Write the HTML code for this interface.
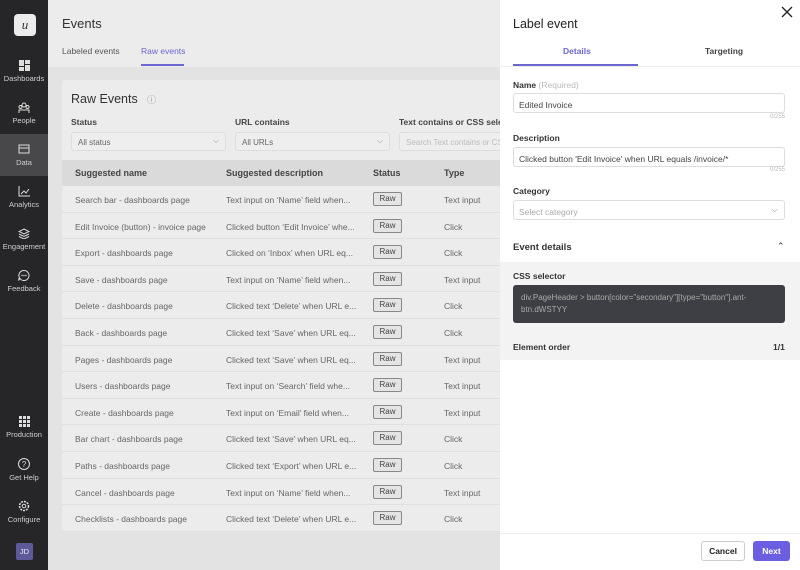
<!DOCTYPE html>
<html><head><style>
*{box-sizing:border-box;margin:0;padding:0}
body{width:800px;height:570px;overflow:hidden;font-family:"Liberation Sans",sans-serif;background:#e3e3e3;position:relative;color:#333}
.sb{position:absolute;left:0;top:0;width:48px;height:570px;background:#262628}
.logo{position:absolute;left:14px;top:14px;width:22px;height:22px;background:#ececec;border-radius:4px;font:italic 13px "Liberation Serif",serif;text-align:center;line-height:22px;color:#333}
.si{position:absolute;left:0;width:48px;text-align:center;color:#cfcfcf;font-size:7.5px}
.si svg{display:block;margin:0 auto 3px}
.hdr{position:absolute;left:48px;top:0;width:452px;height:67px;background:#ececec}
.card{position:absolute;left:62px;top:80px;width:438px;height:452px;background:#ececec;border-radius:3px 0 0 3px}
.row{position:absolute;left:62px;width:438px;height:26.6px;border-bottom:1px solid #e0e0e0;font-size:8.5px;color:#666}
.row span{position:absolute;top:9px;white-space:nowrap}
.raw{position:absolute;left:311px;top:6px;width:29px;height:14px;border:1px solid #888;border-radius:2px;background:#e4e4e4;text-align:center;font-size:8px;line-height:12px;color:#444}
.pn{position:absolute;left:500px;top:0;width:300px;height:570px;background:#fff}
.lab{position:absolute;left:13px;font-size:8.5px;color:#333;font-weight:bold}
.inp{position:absolute;left:13px;width:272px;height:20px;border:1px solid #ddd;border-radius:3px;font-size:8.5px;color:#444;padding:6px 5px}
.cnt{position:absolute;right:15px;font-size:6px;color:#bbb}
</style></head><body>
<div class="sb">
<div class="logo">u</div>
<div class="si" style="top:60px"><svg width="11" height="11"><rect x="0" y="0" width="5" height="6" fill="#ddd"/><rect x="6" y="0" width="5" height="4" fill="#ddd"/><rect x="0" y="7" width="5" height="4" fill="#ddd"/><rect x="6" y="5" width="5" height="6" fill="#ddd"/></svg>Dashboards</div>
<div class="si" style="top:102px"><svg width="12" height="11"><circle cx="6" cy="3" r="2" fill="none" stroke="#ddd"/><circle cx="2.5" cy="5" r="1.5" fill="none" stroke="#ddd"/><circle cx="9.5" cy="5" r="1.5" fill="none" stroke="#ddd"/><path d="M1 11v-3h10v3" fill="none" stroke="#ddd"/></svg>People</div>
<div style="position:absolute;left:0;top:134px;width:48px;height:42px;background:#48484a"></div>
<div class="si" style="top:144px"><svg width="12" height="11"><rect x="1" y="1" width="10" height="8" fill="none" stroke="#ddd"/><path d="M1 4h10" stroke="#ddd"/></svg>Data</div>
<div class="si" style="top:186px"><svg width="12" height="11"><path d="M1 0v10h11M3 8l3-3 2 2 3-4" fill="none" stroke="#ddd"/></svg>Analytics</div>
<div class="si" style="top:228px"><svg width="12" height="11"><path d="M6 1l5 2.5-5 2.5-5-2.5zM1 6l5 2.5 5-2.5M1 8.5l5 2.5 5-2.5" fill="none" stroke="#ddd"/></svg>Engagement</div>
<div class="si" style="top:270px"><svg width="12" height="11"><path d="M6 .5a5 5 0 1 1-4 8l-1.5 2 .8-3A5 5 0 0 1 6 .5z" fill="none" stroke="#ddd"/><circle cx="4" cy="5.5" r=".7" fill="#ddd"/><circle cx="6" cy="5.5" r=".7" fill="#ddd"/><circle cx="8" cy="5.5" r=".7" fill="#ddd"/></svg>Feedback</div>
<div class="si" style="top:416px"><svg width="11" height="11" fill="#ddd"><rect x="0" y="0" width="3" height="3"/><rect x="4" y="0" width="3" height="3"/><rect x="8" y="0" width="3" height="3"/><rect x="0" y="4" width="3" height="3"/><rect x="4" y="4" width="3" height="3"/><rect x="8" y="4" width="3" height="3"/><rect x="0" y="8" width="3" height="3"/><rect x="4" y="8" width="3" height="3"/><rect x="8" y="8" width="3" height="3"/></svg>Production</div>
<div class="si" style="top:458px"><svg width="12" height="12"><circle cx="6" cy="6" r="5.5" fill="none" stroke="#ddd"/><text x="6" y="9" font-size="8" fill="#ddd" text-anchor="middle">?</text></svg>Get Help</div>
<div class="si" style="top:500px"><svg width="12" height="12"><circle cx="6" cy="6" r="4.5" fill="none" stroke="#ddd" stroke-width="1.5" stroke-dasharray="2 1"/><circle cx="6" cy="6" r="1.8" fill="none" stroke="#ddd"/></svg>Configure</div>
<div style="position:absolute;left:16px;top:543px;width:17px;height:17px;background:#5d5a9a;border-radius:2px;color:#eee;font-size:7.5px;text-align:center;line-height:17px">JD</div>
</div>
<div class="hdr">
<div style="position:absolute;left:14px;top:16px;font-size:13px;color:#333">Events</div>
<div style="position:absolute;left:14px;top:46px;font-size:8.5px;color:#555">Labeled events</div>
<div style="position:absolute;left:93px;top:46px;font-size:8.5px;color:#6b66d0">Raw events</div>
<div style="position:absolute;left:93px;top:64px;width:43px;height:2px;background:#6b66d0"></div>
</div>
<div class="card">
<div style="position:absolute;left:9px;top:12px;font-size:12.5px;color:#333">Raw Events <span style="font-size:9px;color:#999;margin-left:6px">ⓘ</span></div>
<div style="position:absolute;left:9px;top:37px;font-size:8.5px;font-weight:bold;color:#444">Status</div>
<div style="position:absolute;left:173px;top:37px;font-size:8.5px;font-weight:bold;color:#444">URL contains</div>
<div style="position:absolute;left:337px;top:37px;font-size:8.5px;font-weight:bold;color:#444;white-space:nowrap">Text contains or CSS selecto</div>
<div style="position:absolute;left:9px;top:52px;width:155px;height:19px;border:1px solid #ddd;border-radius:3px;font-size:8px;color:#666;padding:5px 6px;background:#eee">All status<span style="position:absolute;right:6px;top:3px;color:#999">⌵</span></div>
<div style="position:absolute;left:173px;top:52px;width:155px;height:19px;border:1px solid #ddd;border-radius:3px;font-size:8px;color:#666;padding:5px 6px;background:#eee">All URLs<span style="position:absolute;right:6px;top:3px;color:#999">⌵</span></div>
<div style="position:absolute;left:337px;top:52px;width:110px;height:19px;border:1px solid #ddd;border-radius:3px;font-size:8px;color:#bbb;padding:5px 6px;background:#eee;white-space:nowrap;overflow:hidden">Search Text contains or CSS</div>
<div style="position:absolute;left:0;top:80px;width:438px;height:26px;background:#dbdada;font-size:9px;color:#444;font-weight:bold">
<span style="position:absolute;left:13px;top:8px">Suggested name</span><span style="position:absolute;left:164px;top:8px">Suggested description</span><span style="position:absolute;left:311px;top:8px">Status</span><span style="position:absolute;left:382px;top:8px">Type</span></div>
</div>
<div id="rows"></div>
<div class="pn">
<div style="position:absolute;left:13px;top:17px;font-size:12.5px;color:#222">Label event</div>
<svg style="position:absolute;left:281px;top:6px" width="12" height="12"><path d="M1 1l10 10M11 1L1 11" stroke="#222" stroke-width="1.3"/></svg>
<div style="position:absolute;left:63px;top:46px;font-size:8.5px;color:#6b66d0;font-weight:bold">Details</div>
<div style="position:absolute;left:205px;top:46px;font-size:8.5px;color:#444;font-weight:bold">Targeting</div>
<div style="position:absolute;left:13px;top:64px;width:125px;height:2px;background:#6b66d0"></div>
<div style="position:absolute;left:0;top:66px;width:300px;height:1px;background:#eee"></div>
<div class="lab" style="top:80px">Name <span style="font-weight:normal;color:#bbb">(Required)</span></div>
<div class="inp" style="top:93px">Edited Invoice</div>
<div class="cnt" style="top:114px">0/255</div>
<div class="lab" style="top:133px">Description</div>
<div class="inp" style="top:147px">Clicked button 'Edit Invoice' when URL equals /invoice/*</div>
<div class="cnt" style="top:167px">0/255</div>
<div class="lab" style="top:186px">Category</div>
<div class="inp" style="top:200px;color:#aaa">Select category<span style="position:absolute;right:6px;top:3px;color:#888">⌵</span></div>
<div style="position:absolute;left:13px;top:242px;font-size:9.5px;font-weight:bold;color:#333">Event details</div>
<div style="position:absolute;left:277px;top:241px;font-size:9px;color:#333">⌃</div>
<div style="position:absolute;left:0;top:262px;width:300px;height:98px;background:#f3f3f3">
<div class="lab" style="top:9px">CSS selector</div>
<div style="position:absolute;left:13px;top:23px;width:272px;height:38px;background:#3d3f44;border-radius:3px;color:#aaa;font-size:8px;padding:7px 8px;line-height:12px">div.PageHeader &gt; button[color="secondary"][type="button"].ant-btn.dWSTYY</div>
<div class="lab" style="top:80px">Element order</div>
<div class="lab" style="top:80px;left:273px">1/1</div>
</div>
<div style="position:absolute;left:0;top:533px;width:300px;height:1px;background:#eee"></div>
<div style="position:absolute;left:201px;top:541px;width:44px;height:20px;border:1px solid #ccc;border-radius:3px;font-size:8.5px;font-weight:bold;text-align:center;line-height:18px;color:#222">Cancel</div>
<div style="position:absolute;left:253px;top:541px;width:37px;height:20px;background:#6b5ee0;border-radius:3px;font-size:8.5px;font-weight:bold;text-align:center;line-height:20px;color:#fff">Next</div>
</div>
<script>
var d=[["Search bar - dashboards page","Text input on ‘Name’ field when...","Text input"],["Edit Invoice (button) - invoice page","Clicked button ‘Edit Invoice’ whe...","Click"],["Export - dashboards page","Clicked on ‘Inbox’ when URL eq...","Click"],["Save - dashboards page","Text input on ‘Name’ field when...","Text input"],["Delete - dashboards page","Clicked text ‘Delete’ when URL e...","Click"],["Back - dashboards page","Clicked text ‘Save’ when URL eq...","Click"],["Pages - dashboards page","Clicked text ‘Save’ when URL eq...","Text input"],["Users - dashboards page","Text input on ‘Search’ field whe...","Text input"],["Create - dashboards page","Text input on ‘Email’ field when...","Text input"],["Bar chart - dashboards page","Clicked text ‘Save’ when URL eq...","Click"],["Paths  - dashboards page","Clicked text ‘Export’ when URL e...","Click"],["Cancel - dashboards page","Text input on ‘Name’ field when...","Text input"],["Checklists - dashboards page","Clicked text ‘Delete’ when URL e...","Click"]];
var h="";d.forEach(function(r,i){h+='<div class="row" style="top:'+(186+i*26.6)+'px"><span style="left:13px">'+r[0]+'</span><span style="left:164px">'+r[1]+'</span><div class="raw">Raw</div><span style="left:382px">'+r[2]+'</span></div>'});
document.getElementById("rows").innerHTML=h;
</script>
</body></html>
